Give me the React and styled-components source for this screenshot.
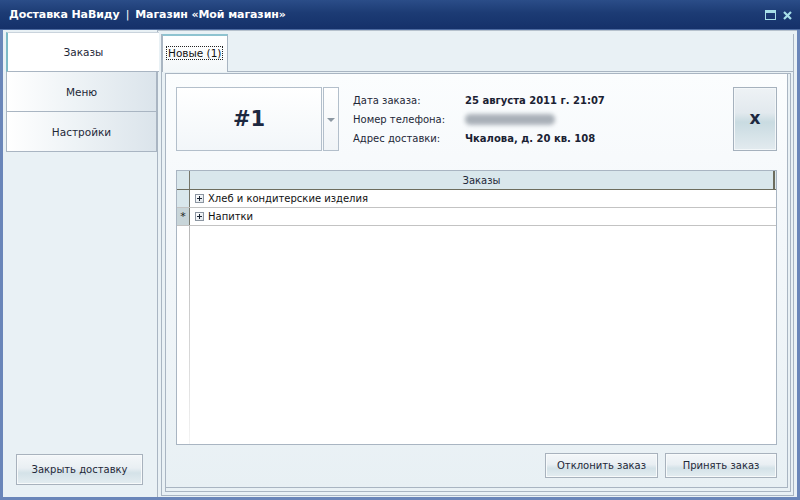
import React from "react";
import styled, { createGlobalStyle } from "styled-components";

const GlobalStyle = createGlobalStyle`
  html, body { margin: 0; padding: 0; }
  body {
    width: 800px;
    height: 500px;
    overflow: hidden;
    font-family: "DejaVu Sans", Tahoma, sans-serif;
    color: #1e2838;
  }
  * { box-sizing: border-box; }
`;

const Window = styled.div`
  width: 800px;
  height: 500px;
  display: flex;
  flex-direction: column;
  background: #6a86b9;
`;

const TitleBar = styled.div`
  height: 30px;
  display: flex;
  align-items: center;
  padding: 0 8px 0 9px;
  background: linear-gradient(180deg, #2b4d88 0%, #1c3b74 45%, #15316a 100%);
  color: #fff;
  font-weight: bold;
  font-size: 11px;
  border-bottom: 1px solid #4d6ba1;
`;

const Title = styled.div`
  flex: 1;
  white-space: nowrap;
  letter-spacing: -0.1px;
`;

const Sep = styled.span`
  font-weight: normal;
  margin: 0 6px;
`;

const WinButtons = styled.div`
  display: flex;
  align-items: center;
  gap: 7px;
  margin-top: 1px;
`;

const Body = styled.div`
  flex: 1;
  display: flex;
  margin: 0 3px 3px 3px;
  background: #e9f1f5;
`;

const Sidebar = styled.div`
  width: 154px;
  display: flex;
  flex-direction: column;
  padding: 2px 0 12px 3px;
`;

const NavItem = styled.div`
  height: 40px;
  display: flex;
  align-items: center;
  justify-content: center;
  font-size: 10.5px;
  color: #1e2838;
  border: 1px solid #a9b5c2;
  border-top: ${(p) => (p.$first ? "1px solid #c9d3dc" : "none")};
  border-left: ${(p) => (p.$active ? "2px solid #7db9c6" : "1px solid #a9b5c2")};
  border-right: ${(p) => (p.$active ? "none" : "1px solid #a9b5c2")};
  background: ${(p) =>
    p.$active ? "#ffffff" : "linear-gradient(90deg, #ffffff 0%, #eef3f6 45%, #dbe4eb 100%)"};
  margin-right: ${(p) => (p.$active ? "-2px" : "0")};
  position: relative;
  z-index: ${(p) => (p.$active ? 1 : 0)};
`;

const Spacer = styled.div`
  flex: 1;
`;

const Button = styled.button`
  width: ${(p) => p.$w}px;
  height: ${(p) => p.$h}px;
  margin-left: ${(p) => p.$ml || 0}px;
  font-family: "DejaVu Sans", Tahoma, sans-serif;
  font-size: 10px;
  color: #1e2838;
  border: 1px solid #a8b2bd;
  box-shadow: inset 0 0 0 1px #f7fafb;
  background: linear-gradient(180deg, #f4f7f9 0%, #e9eff3 45%, #d4e2e8 62%, #e4edf1 100%);
  padding: 0;
  cursor: default;
`;

const Main = styled.div`
  flex: 1;
  display: flex;
  border-left: 1px solid #a9b5c2;
  border-top: 1px solid #b6c1cc;
  padding: 3px 3px 1px 3px;
`;

const TabControl = styled.div`
  flex: 1;
  display: flex;
  flex-direction: column;
  border: 1px solid #a9b5c2;
  border-top: none;
`;

const TabHeader = styled.div`
  height: 38px;
  display: flex;
  border-bottom: 1px solid #a9b5c2;
  margin-left: -1px;
  margin-right: -1px;
`;

const Tab = styled.div`
  width: 66px;
  height: 38px;
  margin-left: 1px;
  border: 1px solid #a9b5c2;
  border-top: 2px solid #8ec3d0;
  border-bottom: none;
  background: linear-gradient(180deg, #ffffff 0%, #f3f7f9 100%);
  padding: 11px 0 0 4px;
  font-size: 10.5px;
  color: #111;
`;

const TabLabel = styled.span`
  outline: 1px dotted #222;
  padding: 0 1px;
`;

const TabPane = styled.div`
  flex: 1;
  display: flex;
  margin: 1px 2px 3px 3px;
  border: 1px solid #a9b5c2;
`;

const PageBody = styled.div`
  flex: 1;
  display: flex;
  flex-direction: column;
  margin: 0 2px 3px 0;
  border-right: 1px solid #a9b5c2;
  border-bottom: 1px solid #a9b5c2;
  padding: 13px 10px 9px 10px;
  background: linear-gradient(180deg, #fbfdfe 0%, #f3f7fa 40%, #e8f0f4 100%);
`;

const OrderRow = styled.div`
  height: 64px;
  display: flex;
`;

const OrderNumber = styled.div`
  width: 146px;
  height: 64px;
  display: flex;
  align-items: center;
  justify-content: center;
  border: 1px solid #b3bfcb;
  background: linear-gradient(180deg, #ffffff 0%, #f2f6f9 100%);
  font-weight: bold;
  font-size: 21px;
  color: #1d2840;
`;

const DropButton = styled.div`
  width: 16px;
  height: 64px;
  margin-left: 1px;
  display: flex;
  align-items: center;
  justify-content: center;
  border: 1px solid #b3bfcb;
  background: linear-gradient(180deg, #ffffff 0%, #f0f4f7 100%);
`;

const Arrow = styled.div`
  width: 0;
  height: 0;
  border-left: 4px solid transparent;
  border-right: 4px solid transparent;
  border-top: 4px solid #8b97a2;
  margin-top: 1px;
`;

const Info = styled.div`
  margin-left: 14px;
  padding-top: 4px;
  display: grid;
  grid-template-columns: 112px auto;
  grid-auto-rows: 19px;
  align-items: center;
  font-size: 10px;
`;

const Label = styled.div`
  color: #1e2838;
`;

const Value = styled.div`
  font-weight: bold;
  color: #1a2233;
  white-space: nowrap;
`;

const Blurred = styled.div`
  width: 90px;
  height: 11px;
  border-radius: 5px;
  background: #a9b0b8;
  filter: blur(2.2px);
`;

const CloseOrder = styled.div`
  margin-left: auto;
  width: 44px;
  height: 64px;
  display: flex;
  align-items: center;
  justify-content: center;
  border: 1px solid #a5b1bd;
  box-shadow: inset 0 0 0 1px #f3f7f9;
  background: linear-gradient(180deg, #eef2f5 0%, #e2e9ee 40%, #c9dbe1 55%, #e3ebef 100%);
  font-weight: bold;
  font-size: 17px;
  color: #1d2840;
  padding-bottom: 3px;
`;

const Grid = styled.div`
  flex: 1;
  margin-top: 19px;
  display: flex;
  flex-direction: column;
  border: 1px solid #a9b5c2;
  background: #fff;
  font-size: 10px;
`;

const GridRow = styled.div`
  height: ${(p) => (p.$header ? 19 : 18)}px;
  display: flex;
  border-bottom: 1px solid ${(p) => (p.$header ? "#6d6d5e" : "#c3c3c3")};
  background: ${(p) => (p.$header ? "#d9e7ec" : "#fff")};
`;

const Indicator = styled.div`
  width: 13px;
  display: flex;
  align-items: center;
  justify-content: center;
  border-right: 1px solid #76766a;
  background: ${(p) => p.$bg || "transparent"};
  font-size: 11px;
  color: #222;
`;

const HeaderCell = styled.div`
  flex: 1;
  display: flex;
  align-items: center;
  justify-content: center;
  color: #1e2838;
  border-right: 2px solid #6d6d5e;
  margin-right: 1px;
`;

const Cell = styled.div`
  flex: 1;
  display: flex;
  align-items: center;
  padding-left: 5px;
  color: #111;
`;

const Expander = styled.span`
  width: 9px;
  height: 9px;
  margin-right: 4px;
  border: 1px solid #8b95a1;
  background: linear-gradient(135deg, #ffffff, #dfe5ea);
  position: relative;
  &::before, &::after {
    content: "";
    position: absolute;
    background: #1b2534;
  }
  &::before { left: 1px; right: 1px; top: 3px; height: 1px; }
  &::after { top: 1px; bottom: 1px; left: 3px; width: 1px; }
`;

const Filler = styled.div`
  flex: 1;
  display: flex;
`;

const FillerLine = styled.div`
  width: 1px;
  margin-left: 12px;
  background: linear-gradient(180deg, #b8b8b8 0%, #d8d8d8 60%, #f4f4f4 100%);
`;

const Footer = styled.div`
  display: flex;
  justify-content: flex-end;
  gap: 7px;
  margin-top: 8px;
`;

const MaxIcon = () => (
  <svg width="11" height="10" viewBox="0 0 11 10">
    <rect x="0.5" y="0.5" width="10" height="9" fill="none" stroke="#a7dfe8" />
    <rect x="0" y="0" width="11" height="3" fill="#a7dfe8" />
  </svg>
);

const CloseIcon = () => (
  <svg width="9" height="9" viewBox="0 0 9 9">
    <path d="M1 1 L8 8 M8 1 L1 8" stroke="#a7dfe8" strokeWidth="2.2" />
  </svg>
);

const navItems = ["Заказы", "Меню", "Настройки"];

const rows = [
  { name: "Хлеб и кондитерские изделия", bg: "#d9e7ec" },
  { name: "Напитки", bg: "#c8d5d9", mark: "*" },
];

export default function App() {
  return (
    <>
      <GlobalStyle />
      <Window>
        <TitleBar>
          <Title>
            Доставка НаВиду<Sep>|</Sep>Магазин «Мой магазин»
          </Title>
          <WinButtons>
            <MaxIcon />
            <CloseIcon />
          </WinButtons>
        </TitleBar>
        <Body>
          <Sidebar>
            {navItems.map((item, i) => (
              <NavItem key={item} $first={i === 0} $active={i === 0}>
                {item}
              </NavItem>
            ))}
            <Spacer />
            <Button $w={127} $h={31} $ml={10}>
              Закрыть доставку
            </Button>
          </Sidebar>
          <Main>
            <TabControl>
              <TabHeader>
                <Tab>
                  <TabLabel>Новые (1)</TabLabel>
                </Tab>
              </TabHeader>
              <TabPane>
                <PageBody>
                  <OrderRow>
                    <OrderNumber>#1</OrderNumber>
                    <DropButton>
                      <Arrow />
                    </DropButton>
                    <Info>
                      <Label>Дата заказа:</Label>
                      <Value>25 августа 2011 г. 21:07</Value>
                      <Label>Номер телефона:</Label>
                      <Blurred />
                      <Label>Адрес доставки:</Label>
                      <Value>Чкалова, д. 20 кв. 108</Value>
                    </Info>
                    <CloseOrder>x</CloseOrder>
                  </OrderRow>
                  <Grid>
                    <GridRow $header>
                      <Indicator $bg="#d9e7ec" />
                      <HeaderCell>Заказы</HeaderCell>
                    </GridRow>
                    {rows.map((r) => (
                      <GridRow key={r.name}>
                        <Indicator $bg={r.bg}>{r.mark}</Indicator>
                        <Cell>
                          <Expander />
                          {r.name}
                        </Cell>
                      </GridRow>
                    ))}
                    <Filler>
                      <FillerLine />
                    </Filler>
                  </Grid>
                  <Footer>
                    <Button $w={113} $h={25}>
                      Отклонить заказ
                    </Button>
                    <Button $w={112} $h={25}>
                      Принять заказ
                    </Button>
                  </Footer>
                </PageBody>
              </TabPane>
            </TabControl>
          </Main>
        </Body>
      </Window>
    </>
  );
}
